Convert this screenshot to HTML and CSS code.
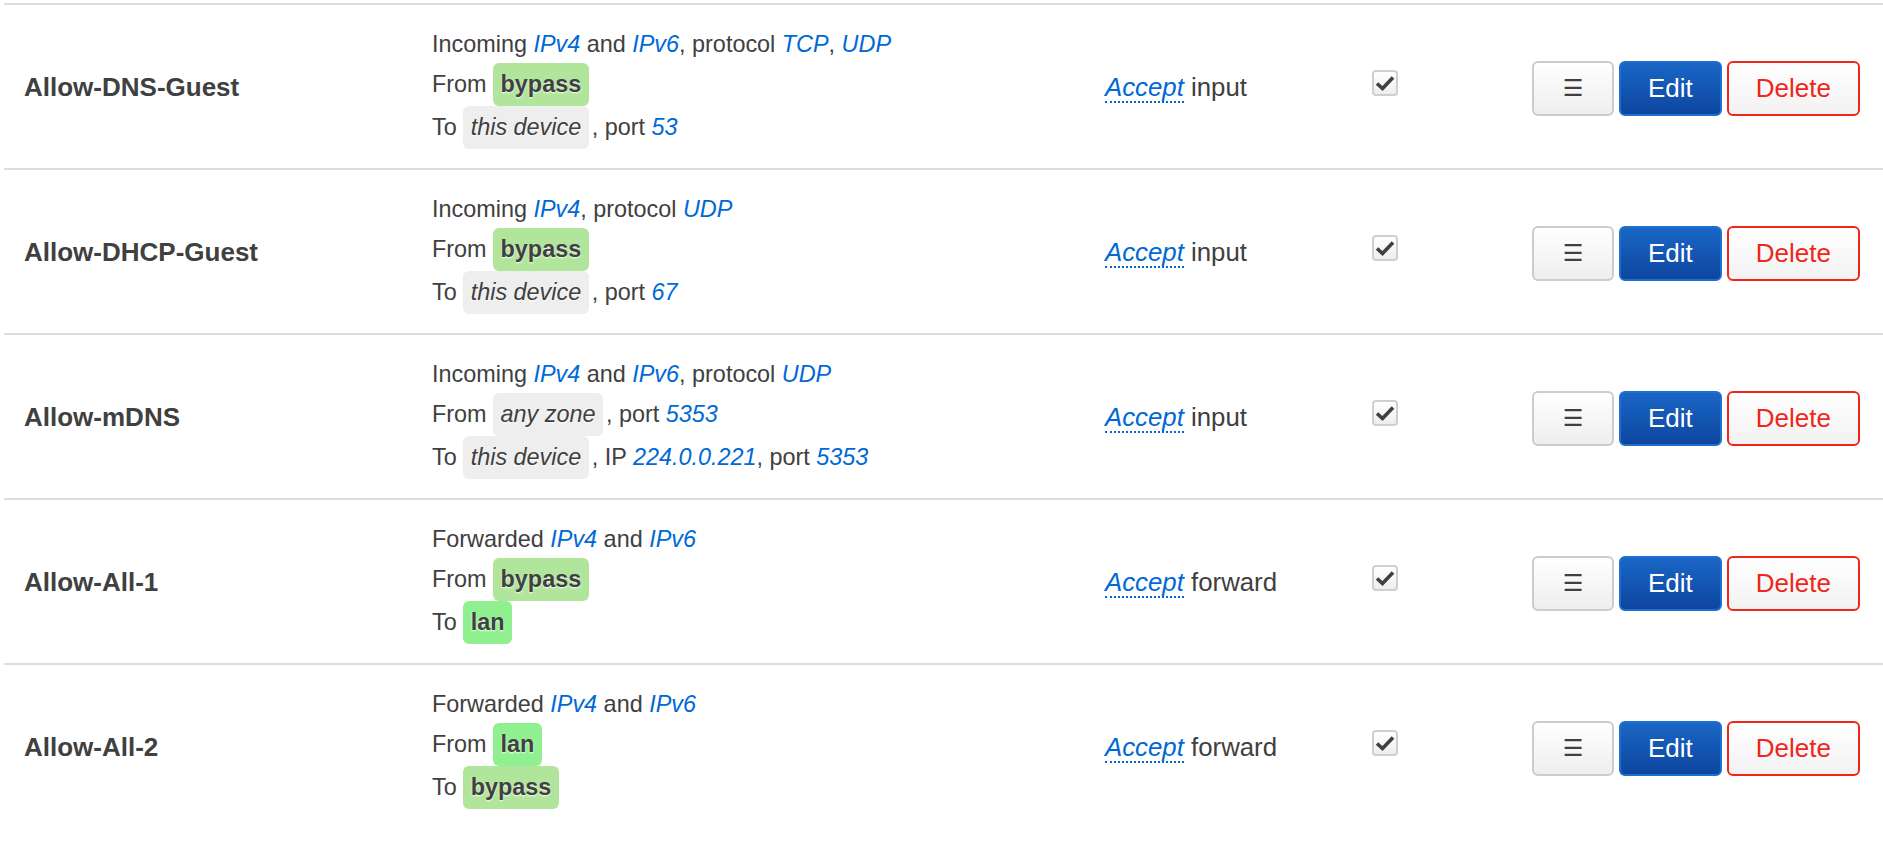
FILE: index.html
```html
<!DOCTYPE html>
<html>
<head>
<meta charset="utf-8">
<link rel="stylesheet" href="styles.css">
</head>
<body>
<div class="table">
  <div class="row">
    <div class="cell name">Allow-DNS-Guest</div>
    <div class="cell desc">
      <div class="l1">Incoming <i class="v">IPv4</i> and <i class="v">IPv6</i>, protocol <i class="v">TCP</i>, <i class="v">UDP</i></div>
      <div class="lp">From <span class="zone z-bypass">bypass</span></div>
      <div class="lp">To <span class="zone z-any">this device</span>, port <i class="v">53</i></div>
    </div>
    <div class="cell target"><i class="act">Accept</i> input</div>
    <div class="cell enable"><span class="cb"><svg viewBox="0 0 22 22" width="22" height="22"><path d="M3 11.5 L8.5 16.5 L19 5.5" fill="none" stroke="#404040" stroke-width="3.6"/></svg></span></div>
    <div class="cell actions"><button class="btn menu">☰</button><button class="btn edit">Edit</button><button class="btn del">Delete</button></div>
  </div>
  <div class="row">
    <div class="cell name">Allow-DHCP-Guest</div>
    <div class="cell desc">
      <div class="l1">Incoming <i class="v">IPv4</i>, protocol <i class="v">UDP</i></div>
      <div class="lp">From <span class="zone z-bypass">bypass</span></div>
      <div class="lp">To <span class="zone z-any">this device</span>, port <i class="v">67</i></div>
    </div>
    <div class="cell target"><i class="act">Accept</i> input</div>
    <div class="cell enable"><span class="cb"><svg viewBox="0 0 22 22" width="22" height="22"><path d="M3 11.5 L8.5 16.5 L19 5.5" fill="none" stroke="#404040" stroke-width="3.6"/></svg></span></div>
    <div class="cell actions"><button class="btn menu">☰</button><button class="btn edit">Edit</button><button class="btn del">Delete</button></div>
  </div>
  <div class="row">
    <div class="cell name">Allow-mDNS</div>
    <div class="cell desc">
      <div class="l1">Incoming <i class="v">IPv4</i> and <i class="v">IPv6</i>, protocol <i class="v">UDP</i></div>
      <div class="lp">From <span class="zone z-any">any zone</span>, port <i class="v">5353</i></div>
      <div class="lp">To <span class="zone z-any">this device</span>, IP <i class="v">224.0.0.221</i>, port <i class="v">5353</i></div>
    </div>
    <div class="cell target"><i class="act">Accept</i> input</div>
    <div class="cell enable"><span class="cb"><svg viewBox="0 0 22 22" width="22" height="22"><path d="M3 11.5 L8.5 16.5 L19 5.5" fill="none" stroke="#404040" stroke-width="3.6"/></svg></span></div>
    <div class="cell actions"><button class="btn menu">☰</button><button class="btn edit">Edit</button><button class="btn del">Delete</button></div>
  </div>
  <div class="row">
    <div class="cell name">Allow-All-1</div>
    <div class="cell desc">
      <div class="l1">Forwarded <i class="v">IPv4</i> and <i class="v">IPv6</i></div>
      <div class="lp">From <span class="zone z-bypass">bypass</span></div>
      <div class="lp">To <span class="zone z-lan">lan</span></div>
    </div>
    <div class="cell target"><i class="act">Accept</i> forward</div>
    <div class="cell enable"><span class="cb"><svg viewBox="0 0 22 22" width="22" height="22"><path d="M3 11.5 L8.5 16.5 L19 5.5" fill="none" stroke="#404040" stroke-width="3.6"/></svg></span></div>
    <div class="cell actions"><button class="btn menu">☰</button><button class="btn edit">Edit</button><button class="btn del">Delete</button></div>
  </div>
  <div class="row">
    <div class="cell name">Allow-All-2</div>
    <div class="cell desc">
      <div class="l1">Forwarded <i class="v">IPv4</i> and <i class="v">IPv6</i></div>
      <div class="lp">From <span class="zone z-lan">lan</span></div>
      <div class="lp">To <span class="zone z-bypass">bypass</span></div>
    </div>
    <div class="cell target"><i class="act">Accept</i> forward</div>
    <div class="cell enable"><span class="cb"><svg viewBox="0 0 22 22" width="22" height="22"><path d="M3 11.5 L8.5 16.5 L19 5.5" fill="none" stroke="#404040" stroke-width="3.6"/></svg></span></div>
    <div class="cell actions"><button class="btn menu">☰</button><button class="btn edit">Edit</button><button class="btn del">Delete</button></div>
  </div>
</div>
</body>
</html>
```
FILE: styles.css
```css
html, body {
  margin: 0;
  padding: 0;
  background: #fff;
}
body {
  font-family: "Liberation Sans", Arial, sans-serif;
  font-size: 23.4px;
  color: #404040;
}
.table {
  padding-top: 3px;
  margin-left: 4px;
}
.row {
  display: grid;
  grid-template-columns: 408px 673px 267px 1fr auto;
  align-items: center;
  height: 163px;
  border-top: 2px solid #ddd;
}
.cell {
  padding-left: 20px;
}
.name {
  font-weight: bold;
  font-size: 26px;
  padding-top: 2px;
}
.desc .l1 {
  line-height: 38px;
  white-space: nowrap;
}
.desc .lp {
  line-height: 43px;
  height: 43px;
  white-space: nowrap;
}
.v {
  color: #0069d6;
}
.zone {
  display: inline-block;
  vertical-align: top;
  line-height: 43px;
  padding: 0 7.5px;
  border-radius: 6px;
  margin-right: 3px;
  text-shadow: 0 1px 2px rgba(255, 255, 255, 0.95);
}
.z-bypass {
  background: #b0e59b;
  font-weight: bold;
}
.z-lan {
  background: #90f090;
  font-weight: bold;
}
.z-any {
  background: #eeeeee;
  font-style: italic;
}
.target {
  font-size: 25.8px;
  padding-top: 2px;
}
.act {
  color: #0069d6;
  border-bottom: 2px dotted #0069d6;
}
.enable {
  display: flex;
}
.cb {
  display: flex;
  align-items: center;
  justify-content: center;
  width: 26px;
  height: 26px;
  box-sizing: border-box;
  border: 2px solid #cfcfcf;
  border-radius: 4px;
  background: linear-gradient(#ffffff, #eeeeee);
  margin-bottom: 8px;
}
.actions {
  display: flex;
  gap: 5px;
  padding-right: 23px;
  padding-top: 3px;
}
.btn {
  font-family: "Liberation Sans", Arial, sans-serif;
  font-size: 26px;
  height: 55px;
  box-sizing: border-box;
  border: 2px solid #cccccc;
  border-radius: 6px;
  padding: 0 27px;
  line-height: 51px;
  cursor: pointer;
}
.menu {
  width: 82px;
  padding: 0;
  text-align: center;
  color: #404040;
  background: linear-gradient(#ffffff, #eeeeee);
  font-family: "DejaVu Sans", sans-serif;
  font-size: 23px;
}
.edit {
  color: #fff;
  background: linear-gradient(#1a66c6, #0d469f);
  border-color: #1d6fd0;
}
.del {
  color: #f0261a;
  background: linear-gradient(#ffffff, #f2f2f2);
  border-color: #f0261a;
  padding: 0 27px;
}
```
